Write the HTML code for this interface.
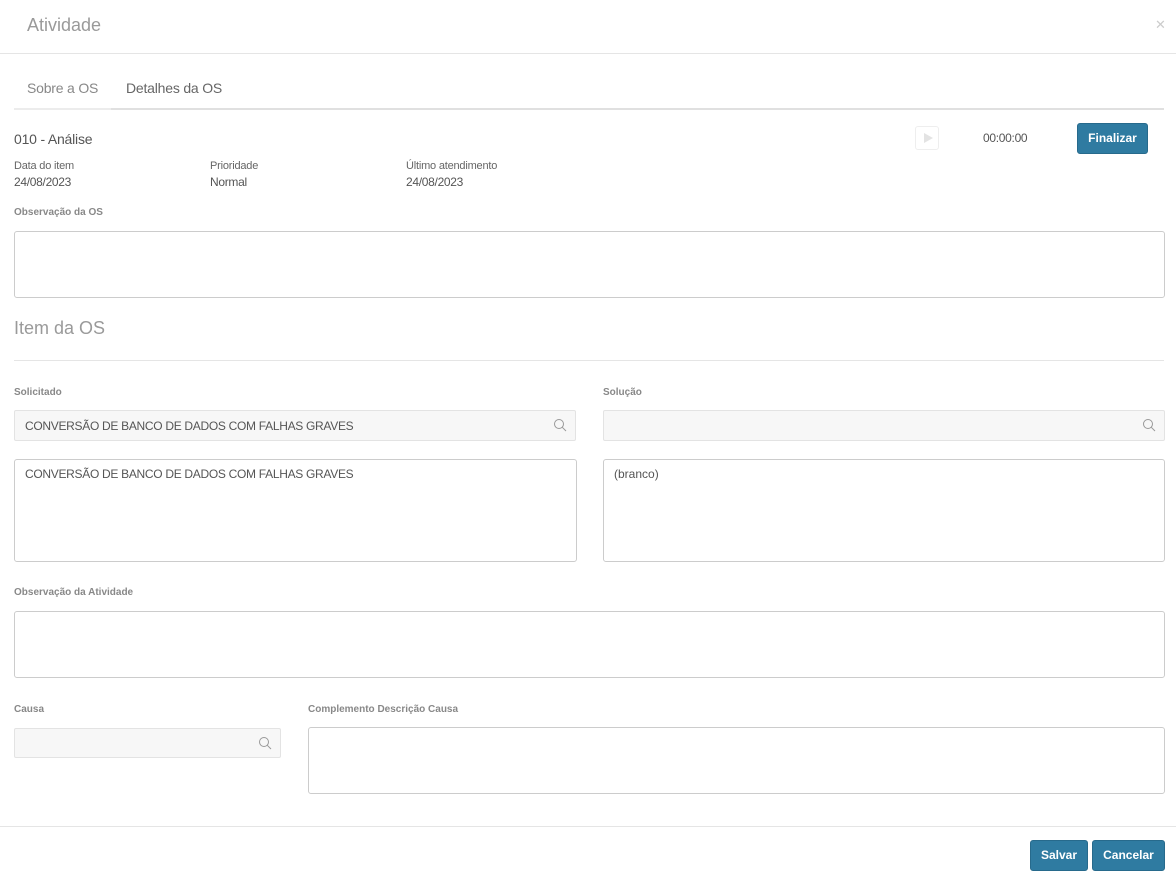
<!DOCTYPE html><html><head><meta charset="utf-8"><style>
body{margin:0;width:1176px;height:883px;background:#fff;font-family:"Liberation Sans",sans-serif;color:#555;position:relative;overflow:hidden}
.a{position:absolute}
.lbl{font-size:10px;font-weight:bold;color:#888}
.box{position:absolute;border:1px solid #ccc;border-radius:3px;box-sizing:border-box;background:#fff}
.inp{position:absolute;border:1px solid #e3e3e3;border-radius:2px;box-sizing:border-box;background:#f7f7f7;font-size:12px;color:#555;padding:8px 10px;letter-spacing:-0.3px}
.btn{position:absolute;background:#2f7ba1;color:#fff;border-radius:3px;font-size:12px;font-weight:bold;text-align:center;border:1px solid #276a8c;box-sizing:border-box}
.hr{position:absolute;height:1px;background:#e5e5e5}
.s{font-size:12px;color:#555}
.mag{position:absolute;right:8px;top:7px}
</style></head><body>
<div class="a" style="left:27px;top:15px;font-size:18px;color:#9a9a9a">Atividade</div>
<div class="a" style="left:1155px;top:17px;font-size:13px;color:#ccc">✕</div>
<div class="hr" style="left:0;top:53px;width:1176px"></div>
<div class="a" style="left:27px;top:80px;font-size:14px;color:#888;letter-spacing:-0.2px">Sobre a OS</div>
<div class="a" style="left:126px;top:80px;font-size:14px;color:#666;letter-spacing:-0.2px">Detalhes da OS</div>
<div class="a" style="left:14px;top:108px;width:1150px;height:2px;background:#e0e0e0"></div>
<div class="a" style="left:14px;top:108px;width:97px;height:2px;background:#ececec"></div>
<div class="a" style="left:14px;top:131px;font-size:14px;color:#555;letter-spacing:-0.2px">010 - Análise</div>
<div class="a" style="left:915px;top:126px;width:24px;height:24px;border:1px solid #eee;border-radius:3px;box-sizing:border-box"><div style="position:absolute;left:8px;top:6px;border-left:9px solid #e3e3e3;border-top:5.5px solid transparent;border-bottom:5.5px solid transparent"></div></div>
<div class="a s" style="left:983px;top:131px;letter-spacing:-0.3px">00:00:00</div>
<div class="btn" style="left:1077px;top:123px;width:71px;height:31px;line-height:29px">Finalizar</div>
<div class="a" style="left:14px;top:160px;font-size:11px;color:#666;letter-spacing:-0.2px">Data do item</div>
<div class="a s" style="left:14px;top:175px;letter-spacing:-0.3px">24/08/2023</div>
<div class="a" style="left:210px;top:160px;font-size:11px;color:#666;letter-spacing:-0.2px">Prioridade</div>
<div class="a s" style="left:210px;top:175px;letter-spacing:-0.3px">Normal</div>
<div class="a" style="left:406px;top:160px;font-size:11px;color:#666;letter-spacing:-0.2px">Último atendimento</div>
<div class="a s" style="left:406px;top:175px;letter-spacing:-0.3px">24/08/2023</div>
<div class="a lbl" style="left:14px;top:207px">Observação da OS</div>
<div class="box" style="left:14px;top:231px;width:1151px;height:67px"></div>
<div class="a" style="left:14px;top:318px;font-size:18px;color:#9a9a9a">Item da OS</div>
<div class="hr" style="left:14px;top:360px;width:1150px"></div>
<div class="a lbl" style="left:14px;top:387px">Solicitado</div>
<div class="a lbl" style="left:603px;top:387px">Solução</div>
<div class="inp" style="left:14px;top:410px;width:562px;height:31px">CONVERSÃO DE BANCO DE DADOS COM FALHAS GRAVES<svg class="mag" width="14" height="14" viewBox="0 0 14 14"><circle cx="6" cy="6" r="4.5" fill="none" stroke="#999" stroke-width="1"/><path d="M9.3 9.3L13 13" stroke="#999"/></svg></div>
<div class="inp" style="left:603px;top:410px;width:562px;height:31px"><svg class="mag" width="14" height="14" viewBox="0 0 14 14"><circle cx="6" cy="6" r="4.5" fill="none" stroke="#999" stroke-width="1"/><path d="M9.3 9.3L13 13" stroke="#999"/></svg></div>
<div class="box" style="left:14px;top:459px;width:563px;height:103px;font-size:12px;padding:7px 10px;letter-spacing:-0.3px">CONVERSÃO DE BANCO DE DADOS COM FALHAS GRAVES</div>
<div class="box" style="left:603px;top:459px;width:562px;height:103px;font-size:12px;padding:7px 10px">(branco)</div>
<div class="a lbl" style="left:14px;top:587px">Observação da Atividade</div>
<div class="box" style="left:14px;top:611px;width:1151px;height:67px"></div>
<div class="a lbl" style="left:14px;top:704px">Causa</div>
<div class="a lbl" style="left:308px;top:704px">Complemento Descrição Causa</div>
<div class="inp" style="left:14px;top:728px;width:267px;height:30px"><svg class="mag" width="14" height="14" viewBox="0 0 14 14"><circle cx="6" cy="6" r="4.5" fill="none" stroke="#999" stroke-width="1"/><path d="M9.3 9.3L13 13" stroke="#999"/></svg></div>
<div class="box" style="left:308px;top:727px;width:857px;height:67px"></div>
<div class="hr" style="left:0;top:826px;width:1176px"></div>
<div class="btn" style="left:1030px;top:840px;width:58px;height:31px;line-height:29px">Salvar</div>
<div class="btn" style="left:1092px;top:840px;width:73px;height:31px;line-height:29px">Cancelar</div>
</body></html>
